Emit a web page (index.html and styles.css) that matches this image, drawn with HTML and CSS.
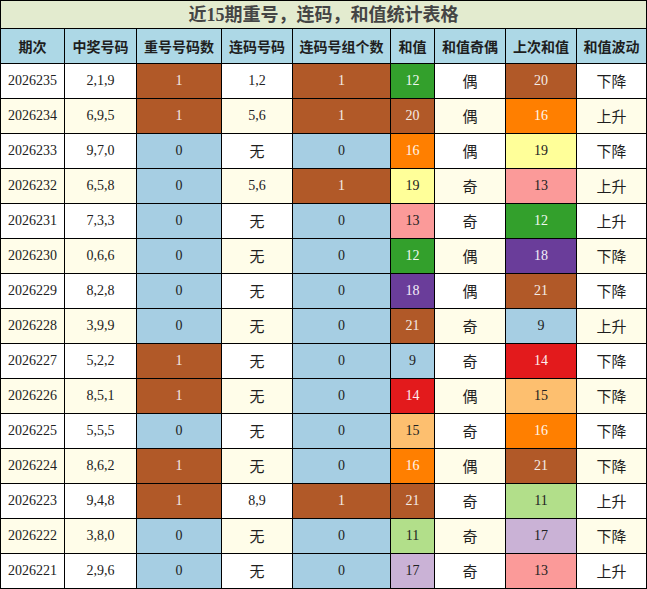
FILE: index.html
```html
<!DOCTYPE html>
<html lang="zh">
<head>
<meta charset="utf-8">
<title>近15期重号，连码，和值统计表格</title>
<link rel="stylesheet" href="styles.css">
</head>
<body>
<table class="stats">
  <colgroup>
    <col class="w64"><col class="w72"><col class="w85"><col class="w71"><col class="w98"><col class="w44"><col class="w71"><col class="w71"><col class="w70">
  </colgroup>
  <thead>
    <tr class="title-row"><th colspan="9" class="title">近15期重号，连码，和值统计表格</th></tr>
    <tr class="head-row">
      <th>期次</th><th>中奖号码</th><th>重号号码数</th><th>连码号码</th><th>连码号组个数</th><th>和值</th><th>和值奇偶</th><th>上次和值</th><th>和值波动</th>
    </tr>
  </thead>
  <tbody>
    <tr class="odd"><td>2026235</td><td>2,1,9</td><td class="brown">1</td><td>1,2</td><td class="brown">1</td><td class="green">12</td><td class="cjk">偶</td><td class="brown">20</td><td class="cjk">下降</td></tr>
    <tr class="even"><td>2026234</td><td>6,9,5</td><td class="brown">1</td><td>5,6</td><td class="brown">1</td><td class="brown">20</td><td class="cjk">偶</td><td class="orange">16</td><td class="cjk">上升</td></tr>
    <tr class="odd"><td>2026233</td><td>9,7,0</td><td class="blue">0</td><td class="cjk">无</td><td class="blue">0</td><td class="orange">16</td><td class="cjk">偶</td><td class="yellow">19</td><td class="cjk">下降</td></tr>
    <tr class="even"><td>2026232</td><td>6,5,8</td><td class="blue">0</td><td>5,6</td><td class="brown">1</td><td class="yellow">19</td><td class="cjk">奇</td><td class="pink">13</td><td class="cjk">上升</td></tr>
    <tr class="odd"><td>2026231</td><td>7,3,3</td><td class="blue">0</td><td class="cjk">无</td><td class="blue">0</td><td class="pink">13</td><td class="cjk">奇</td><td class="green">12</td><td class="cjk">上升</td></tr>
    <tr class="even"><td>2026230</td><td>0,6,6</td><td class="blue">0</td><td class="cjk">无</td><td class="blue">0</td><td class="green">12</td><td class="cjk">偶</td><td class="purple">18</td><td class="cjk">下降</td></tr>
    <tr class="odd"><td>2026229</td><td>8,2,8</td><td class="blue">0</td><td class="cjk">无</td><td class="blue">0</td><td class="purple">18</td><td class="cjk">偶</td><td class="brown">21</td><td class="cjk">下降</td></tr>
    <tr class="even"><td>2026228</td><td>3,9,9</td><td class="blue">0</td><td class="cjk">无</td><td class="blue">0</td><td class="brown">21</td><td class="cjk">奇</td><td class="blue">9</td><td class="cjk">上升</td></tr>
    <tr class="odd"><td>2026227</td><td>5,2,2</td><td class="brown">1</td><td class="cjk">无</td><td class="blue">0</td><td class="blue">9</td><td class="cjk">奇</td><td class="red">14</td><td class="cjk">下降</td></tr>
    <tr class="even"><td>2026226</td><td>8,5,1</td><td class="brown">1</td><td class="cjk">无</td><td class="blue">0</td><td class="red">14</td><td class="cjk">偶</td><td class="lorange">15</td><td class="cjk">下降</td></tr>
    <tr class="odd"><td>2026225</td><td>5,5,5</td><td class="blue">0</td><td class="cjk">无</td><td class="blue">0</td><td class="lorange">15</td><td class="cjk">奇</td><td class="orange">16</td><td class="cjk">下降</td></tr>
    <tr class="even"><td>2026224</td><td>8,6,2</td><td class="brown">1</td><td class="cjk">无</td><td class="blue">0</td><td class="orange">16</td><td class="cjk">偶</td><td class="brown">21</td><td class="cjk">下降</td></tr>
    <tr class="odd"><td>2026223</td><td>9,4,8</td><td class="brown">1</td><td>8,9</td><td class="brown">1</td><td class="brown">21</td><td class="cjk">奇</td><td class="lgreen">11</td><td class="cjk">上升</td></tr>
    <tr class="even"><td>2026222</td><td>3,8,0</td><td class="blue">0</td><td class="cjk">无</td><td class="blue">0</td><td class="lgreen">11</td><td class="cjk">奇</td><td class="lpurple">17</td><td class="cjk">下降</td></tr>
    <tr class="odd"><td>2026221</td><td>2,9,6</td><td class="blue">0</td><td class="cjk">无</td><td class="blue">0</td><td class="lpurple">17</td><td class="cjk">奇</td><td class="pink">13</td><td class="cjk">上升</td></tr>
  </tbody>
</table>
</body>
</html>
```
FILE: styles.css
```css
html, body {
  margin: 0;
  padding: 0;
  background: #ffffff;
}

.stats {
  border-collapse: collapse;
  table-layout: fixed;
  width: 647px;
  font-family: "Liberation Serif", "Noto Sans CJK SC", serif;
  font-size: 14px;
  color: #222222;
}

.w64 { width: 64px; }
.w72 { width: 72px; }
.w85 { width: 85px; }
.w71 { width: 71px; }
.w98 { width: 98px; }
.w44 { width: 44px; }
.w70 { width: 70px; }

.stats th,
.stats td {
  border: 1px solid #000000;
  padding: 0;
  text-align: center;
  vertical-align: middle;
  line-height: 16px;
}

.title-row { height: 28px; }

.title {
  background: #e3ebcf;
  color: #454545;
  font-size: 18px;
  font-weight: bold;
  font-family: "Liberation Serif", "Noto Sans CJK SC", serif;
}

.head-row { height: 35px; }

.head-row th {
  background: #add8e6;
  font-family: "Noto Sans CJK SC", sans-serif;
  font-size: 14px;
  font-weight: bold;
  color: #1e1e1e;
}

.stats tbody tr { height: 35px; }

.odd td { background: #ffffff; }
.even td { background: #fffde9; }

.stats td.cjk {
  font-family: "Noto Sans CJK SC", sans-serif;
  font-size: 15px;
  color: #1e1e1e;
}

.stats td.brown { background: #b15928; color: #f4ece6; }
.stats td.blue { background: #a6cee3; color: #222222; }
.stats td.green { background: #33a02c; color: #f2f8f1; }
.stats td.orange { background: #ff7f00; color: #fff6ec; }
.stats td.yellow { background: #ffff99; color: #222222; }
.stats td.pink { background: #fb9a99; color: #222222; }
.stats td.purple { background: #6a3d9a; color: #f3eef8; }
.stats td.red { background: #e31a1c; color: #fdeeee; }
.stats td.lorange { background: #fdbf6f; color: #222222; }
.stats td.lgreen { background: #b2df8a; color: #222222; }
.stats td.lpurple { background: #cab2d6; color: #222222; }
```
